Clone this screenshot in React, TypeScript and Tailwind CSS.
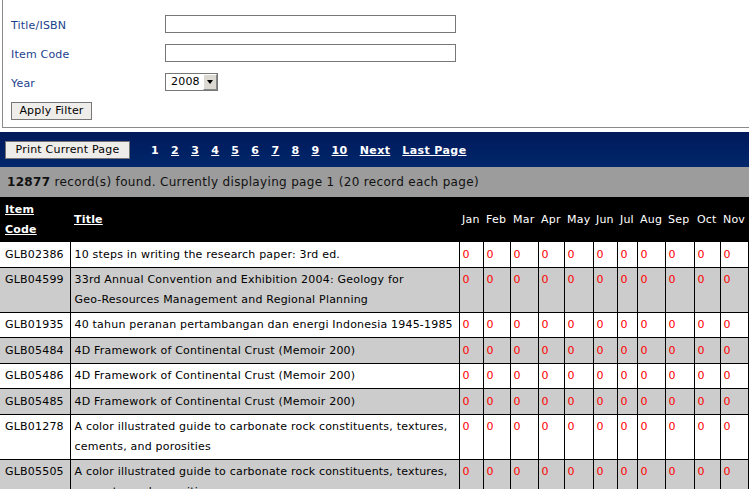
import React from "react";

const months = ["Jan", "Feb", "Mar", "Apr", "May", "Jun", "Jul", "Aug", "Sep", "Oct", "Nov", "Dec"];
const monthWidths = [24, 27, 28, 26, 29, 24, 20, 28, 29, 26, 28, 28];

// titles are kept as the lines they wrap into on the page
const rows = [
  { code: "GLB02386", title: ["10 steps in writing the research paper: 3rd ed."] },
  { code: "GLB04599", title: ["33rd Annual Convention and Exhibition 2004: Geology for", "Geo-Resources Management and Regional Planning"] },
  { code: "GLB01935", title: ["40 tahun peranan pertambangan dan energi Indonesia 1945-1985"] },
  { code: "GLB05484", title: ["4D Framework of Continental Crust (Memoir 200)"] },
  { code: "GLB05486", title: ["4D Framework of Continental Crust (Memoir 200)"] },
  { code: "GLB05485", title: ["4D Framework of Continental Crust (Memoir 200)"] },
  { code: "GLB01278", title: ["A color illustrated guide to carbonate rock constituents, textures,", "cements, and porosities"] },
  { code: "GLB05505", title: ["A color illustrated guide to carbonate rock constituents, textures,", "cements, and porosities"] },
];

const pages = ["2", "3", "4", "5", "6", "7", "8", "9", "10", "Next", "Last Page"];

function FilterRow({ label, children }: { label: string; children: React.ReactNode }) {
  return (
    <div className="flex h-[29px] items-center">
      <div className="w-[154px] pt-[6px] text-[#1c3f8c]">{label}</div>
      {children}
    </div>
  );
}

export default function App() {
  return (
    <div className="w-[749px] h-[489px] overflow-hidden bg-white font-['DejaVu_Sans',sans-serif] text-[11px] tracking-[0.2px] text-black">
      {/* filter panel */}
      <div className="ml-[2px] h-[128px] border-l border-b border-[#8a8a8a] pl-[8px] pt-[9px]">
        <FilterRow label="Title/ISBN">
          <div className="w-[291px] h-[18px] border border-[#777] bg-white" />
        </FilterRow>
        <FilterRow label="Item Code">
          <div className="w-[291px] h-[18px] border border-[#777] bg-white" />
        </FilterRow>
        <FilterRow label="Year">
          <div className="flex w-[53px] h-[18px] items-stretch border border-[#777] bg-white">
            <span className="flex-1 pl-[5px] leading-[16px]">2008</span>
            <span className="flex w-[14px] items-center justify-center bg-[#dcd8d2] border-t border-l border-t-white border-l-white border-r border-b border-r-[#888] border-b-[#888]">
              <span className="w-0 h-0 border-l-[3px] border-r-[3px] border-t-[4px] border-l-transparent border-r-transparent border-t-black" />
            </span>
          </div>
        </FilterRow>
        <div className="flex h-[29px] items-center">
          <button className="h-[18px] w-[81px] border border-[#777] bg-[#efedea] leading-[16px]">Apply Filter</button>
        </div>
      </div>

      {/* pager bar */}
      <div className="mt-[4px] flex h-[35px] items-center bg-gradient-to-b from-[#00195a] to-[#00276c] pl-[5px]">
        <button className="h-[18px] w-[125px] border border-[#777] bg-[#efedea] leading-[16px]">Print Current Page</button>
        <div className="ml-[21px] mt-[3px] flex gap-3 font-bold tracking-[0.4px] text-white">
          <span>1</span>
          {pages.map((p) => (
            <a key={p} className="underline cursor-pointer">
              {p}
            </a>
          ))}
        </div>
      </div>

      {/* status */}
      <div className="flex h-[30px] items-center bg-[#9c9c9c] pl-[7px] text-[12px] tracking-[0.33px] text-[#111]">
        <b>12877</b>&nbsp;record(s) found. Currently displaying page 1 (20 record each page)
      </div>

      {/* results */}
      <table className="table-fixed border-collapse w-[776px] leading-[19.5px]">
        <colgroup>
          <col className="w-[70px]" />
          <col className="w-[389px]" />
          {monthWidths.map((w, i) => (
            <col key={i} style={{ width: w }} />
          ))}
        </colgroup>
        <thead>
          <tr className="bg-black text-white h-[45px]">
            <th className="pl-[5px] pr-[2px] text-left font-bold underline align-middle">
              Item
              <br />
              Code
            </th>
            <th className="pl-[4px] pr-[2px] text-left font-bold underline align-middle">Title</th>
            {months.map((m) => (
              <th key={m} className="px-[3px] text-left font-normal align-middle">
                {m}
              </th>
            ))}
          </tr>
        </thead>
        <tbody>
          {rows.map((r, i) => (
            <tr key={i} className={i % 2 === 0 ? "bg-white" : "bg-[#cccccc]"}>
              <td className="border-b border-r border-black pl-[5px] pr-[2px] py-[2.5px] align-top">{r.code}</td>
              <td className="border-b border-r border-black pl-[4px] pr-[2px] py-[2.5px] align-top whitespace-nowrap">
                {r.title.map((line, j) => (
                  <React.Fragment key={j}>
                    {j > 0 && <br />}
                    {line}
                  </React.Fragment>
                ))}
              </td>
              {months.map((m) => (
                <td key={m} className="border-b border-r border-black px-[3px] py-[2.5px] align-top text-[#ff0000]">
                  0
                </td>
              ))}
            </tr>
          ))}
        </tbody>
      </table>
    </div>
  );
}
